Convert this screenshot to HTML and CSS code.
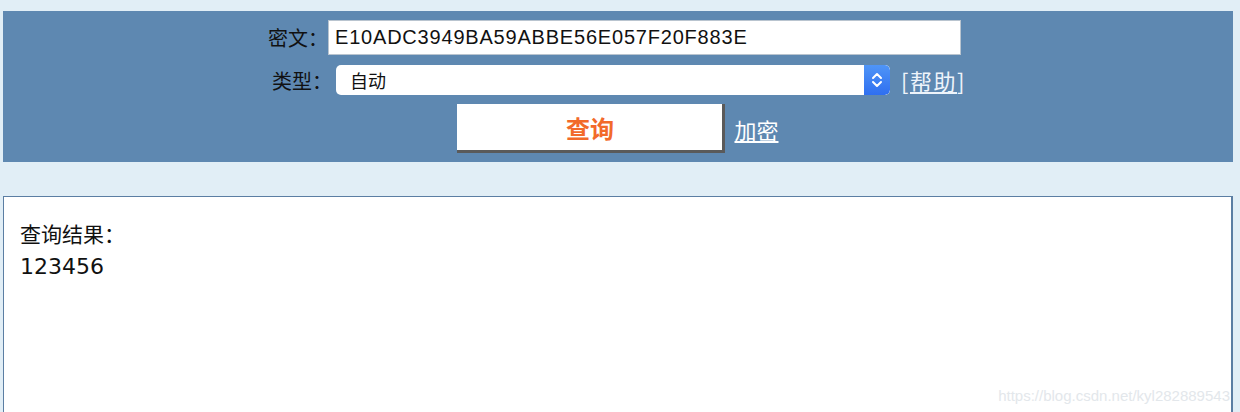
FILE: index.html
```html
<!DOCTYPE html>
<html lang="zh-CN">
<head>
<meta charset="utf-8">
<title>MD5 解密</title>
<link rel="stylesheet" href="styles.css">
</head>
<body>
<div class="panel">
  <div class="row row-cipher">
    <label class="label">密文：</label>
    <div class="text-input">E10ADC3949BA59ABBE56E057F20F883E</div>
  </div>
  <div class="row row-type">
    <label class="label">类型：</label>
    <div class="select">
      <span class="select-value">自动</span>
      <span class="select-arrow">
        <svg width="14" height="20" viewBox="0 0 14 20"><path d="M3 8 L7 4 L11 8 M3 12 L7 16 L11 12" fill="none" stroke="#fff" stroke-width="2" stroke-linecap="round" stroke-linejoin="round"/></svg>
      </span>
    </div>
    <a class="help" href="#">[<u>帮助</u>]</a>
  </div>
  <div class="row row-actions">
    <button class="query-btn">查询</button>
    <a class="encrypt" href="#">加密</a>
  </div>
</div>
<div class="result">
  <div class="result-title">查询结果：</div>
  <div class="result-value">123456</div>
</div>
<div class="watermark">https://blog.csdn.net/kyl282889543</div>
</body>
</html>
```
FILE: styles.css
```css
html, body {
  margin: 0;
  padding: 0;
}
body {
  background: #e1eef6;
  width: 1240px;
  height: 412px;
  overflow: hidden;
  position: relative;
  font-family: "Liberation Sans", "Noto Sans CJK SC", sans-serif;
}
.panel {
  margin: 11px 7px 0 3px;
  height: 151px;
  background: #5e88b1;
  box-sizing: border-box;
  padding-top: 9px;
  display: flex;
  flex-direction: column;
}
.row {
  display: flex;
  justify-content: center;
  align-items: center;
}
.label {
  font-family: "Noto Sans CJK SC", sans-serif;
  font-size: 20px;
  color: #111;
}
.row-cipher {
  height: 35px;
  padding-right: 7px;
}
.text-input {
  width: 633px;
  height: 35px;
  box-sizing: border-box;
  background: #fff;
  border: 1px solid #b9c4cf;
  padding-left: 6px;
  font-family: "Liberation Sans", sans-serif;
  font-size: 20px;
  letter-spacing: 0.8px;
  line-height: 33px;
  color: #111;
}
.row-type {
  margin-top: 10px;
  height: 30px;
  padding-left: 2px;
}
.row-type .label {
  margin-right: 4px;
}
.select {
  width: 554px;
  height: 30px;
  background: #fff;
  border-radius: 5px;
  display: flex;
  align-items: center;
  justify-content: space-between;
  overflow: hidden;
}
.select-value {
  font-family: "Noto Sans CJK SC", sans-serif;
  font-size: 18px;
  color: #111;
  padding-left: 14px;
}
.select-arrow {
  width: 26px;
  height: 30px;
  background: linear-gradient(#4f95f7, #2f6ff0);
  display: flex;
  align-items: center;
  justify-content: center;
  border-radius: 0 5px 5px 0;
}
.help {
  margin-left: 11px;
  color: #eef4fb;
  text-decoration: none;
  font-family: "Noto Sans CJK SC", sans-serif;
  font-size: 22px;
  letter-spacing: 1.5px;
}
.row-actions {
  margin-top: 9px;
}
.query-btn {
  width: 268px;
  height: 49px;
  box-sizing: border-box;
  background: #fff;
  border: none;
  border-right: 3px solid #5a5a5a;
  border-bottom: 3px solid #5a5a5a;
  color: #f26a2a;
  font-family: "Noto Sans CJK SC", sans-serif;
  font-weight: bold;
  font-size: 24px;
  padding: 0;
}
.encrypt {
  margin-left: 9px;
  color: #fff;
  font-family: "Noto Sans CJK SC", sans-serif;
  font-size: 22px;
  text-decoration: underline;
}
.result {
  margin: 34px 7px 0 3px;
  height: 216px;
  background: #fff;
  border: 1px solid #5b7ea3;
  border-right-width: 2px;
  border-bottom: none;
  box-sizing: border-box;
  padding: 19px 16px;
}
.result-title {
  font-family: "Noto Sans CJK SC", sans-serif;
  font-size: 21px;
  line-height: 34px;
  color: #111;
}
.result-value {
  font-family: "DejaVu Sans", sans-serif;
  font-size: 22px;
  line-height: 34px;
  color: #111;
}
.watermark {
  position: absolute;
  right: 10px;
  bottom: 8px;
  font-family: "Liberation Sans", sans-serif;
  font-size: 15px;
  color: #e3e7eb;
}
```
